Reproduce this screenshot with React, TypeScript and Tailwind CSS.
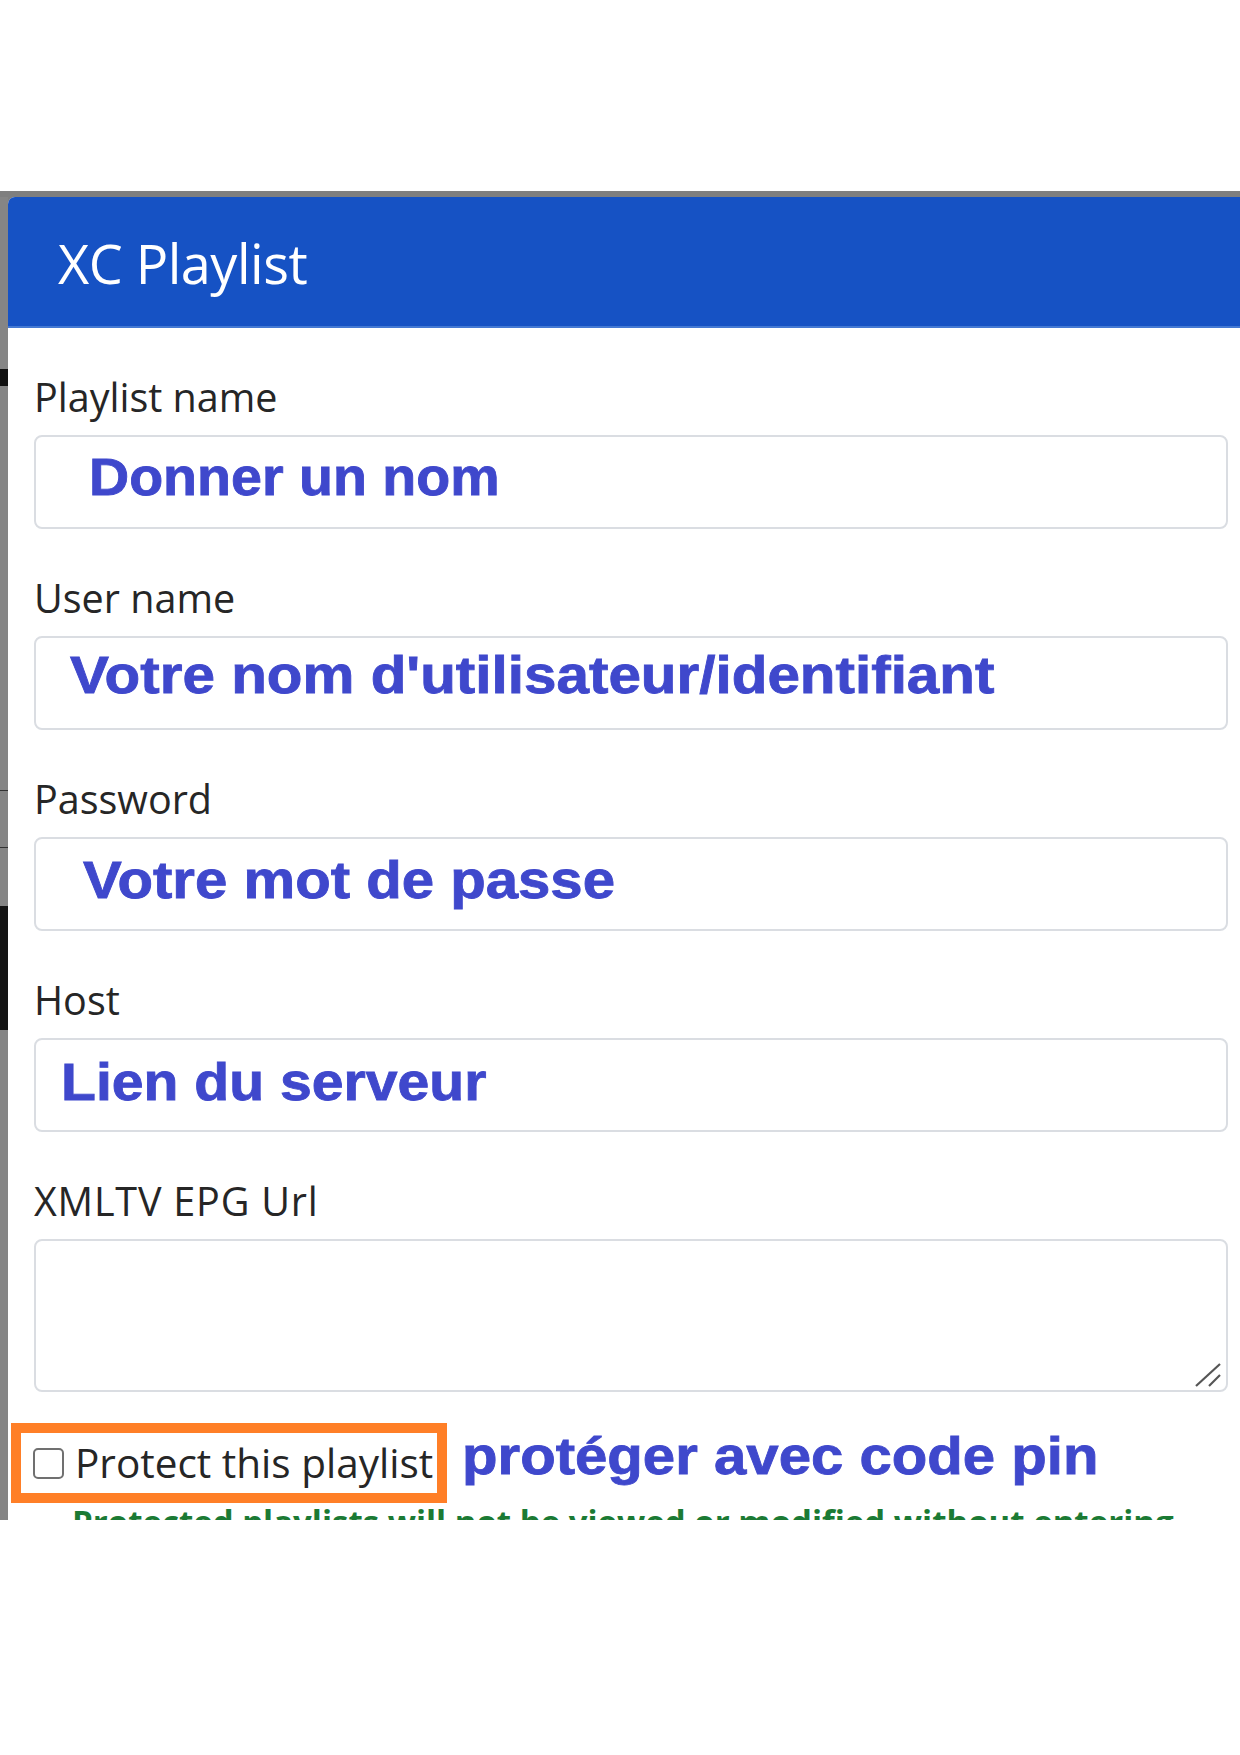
import React from "react";

const labelCls =
  "font-['Open_Sans',sans-serif] text-[39.5px] leading-[48px] text-[#262626] mb-[14px] whitespace-nowrap";
const noteCls =
  "inline-block origin-left font-['Liberation_Sans',Arial,sans-serif] font-bold text-[51px] leading-[49px] text-[#3f48cc] whitespace-nowrap [-webkit-text-stroke:0.8px_#3f48cc]";

function Field({
  label,
  children,
  mt,
}: {
  label: string;
  children: React.ReactNode;
  mt?: boolean;
}) {
  return (
    <div className={mt ? "mt-[45px]" : ""}>
      <div className={labelCls}>{label}</div>
      <div className="h-[94px] border-2 border-[#dadde2] rounded-[8px] bg-white">
        {children}
      </div>
    </div>
  );
}

export default function App() {
  return (
    <div className="w-[1240px] h-[1755px] bg-white overflow-hidden">
      <div className="h-[191px]" />
      <div className="flex bg-[#7f7f7f] pt-[6px] h-[1329px]">
        {/* backdrop strip on the left */}
        <div className="w-[8px] flex flex-col">
          <div className="h-[172px] bg-[#858585]" />
          <div className="h-[17px] bg-[#111]" />
          <div className="h-[404px] bg-[#858585]" />
          <div className="h-[1px] bg-[#333]" />
          <div className="h-[56px] bg-[#858585]" />
          <div className="h-[1px] bg-[#333]" />
          <div className="h-[58px] bg-[#858585]" />
          <div className="h-[124px] bg-[#141414]" />
          <div className="flex-1 bg-[#858585]" />
        </div>

        {/* modal */}
        <div className="flex-1 bg-white rounded-tl-[7px] overflow-hidden flex flex-col">
          <div className="h-[131px] shrink-0 bg-[#1652c4] border-b-2 border-[#4479d3] flex items-center pl-[50px] pt-[2px]">
            <span className="font-['Open_Sans',sans-serif] text-[54px] text-white leading-none tracking-[-0.5px]">
              XC Playlist
            </span>
          </div>

          <div className="pl-[26px] pr-[12px] pt-[45px]">
            <Field label="Playlist name">
              <div className="pl-[53px] pt-[16px]">
                <span className={noteCls + " scale-x-[1.09]"}>Donner un nom</span>
              </div>
            </Field>
            <Field label="User name" mt>
              <div className="pl-[34px] pt-[13px]">
                <span className={noteCls + " scale-x-[1.145]"}>
                  Votre nom d'utilisateur/identifiant
                </span>
              </div>
            </Field>
            <Field label="Password" mt>
              <div className="pl-[47px] pt-[17px]">
                <span className={noteCls + " scale-x-[1.14]"}>Votre mot de passe</span>
              </div>
            </Field>
            <Field label="Host" mt>
              <div className="pl-[25px] pt-[18px]">
                <span className={noteCls + " scale-x-[1.12]"}>Lien du serveur</span>
              </div>
            </Field>

            <div className="mt-[45px]">
              <div className={labelCls + " tracking-[0.8px]"}>XMLTV EPG Url</div>
              <div className="relative h-[153px] border-2 border-[#dadde2] rounded-[8px] bg-white">
                <svg
                  className="absolute right-[4px] bottom-[2px]"
                  width="28"
                  height="26"
                  viewBox="0 0 28 26"
                >
                  <line x1="2" y1="24" x2="26" y2="2" stroke="#555" strokeWidth="2.2" />
                  <line x1="15" y1="24" x2="26" y2="13" stroke="#555" strokeWidth="2.2" />
                </svg>
              </div>
            </div>

            <div className="mt-[31px] flex items-start ml-[-23px]">
              <div className="w-[436px] h-[80px] border-[10px] border-[#ff7f27] flex items-center pl-[12px] shrink-0">
                <div className="w-[31px] h-[31px] border-2 border-[#707070] rounded-[5px] bg-white shrink-0" />
                <span className="ml-[11px] font-['Open_Sans',sans-serif] text-[40.5px] leading-[48px] text-[#262626] whitespace-nowrap">
                  Protect this playlist
                </span>
              </div>
              <div className="ml-[15px] mt-[9px]">
                <span className={noteCls + " scale-x-[1.14]"}>protéger avec code pin</span>
              </div>
            </div>

            <div className="ml-[38px] font-['Open_Sans',sans-serif] font-bold text-[33px] leading-[38px] text-[#1b7a34] whitespace-nowrap">
              Protected playlists will not be viewed or modified without entering
            </div>
          </div>
        </div>
      </div>
    </div>
  );
}
